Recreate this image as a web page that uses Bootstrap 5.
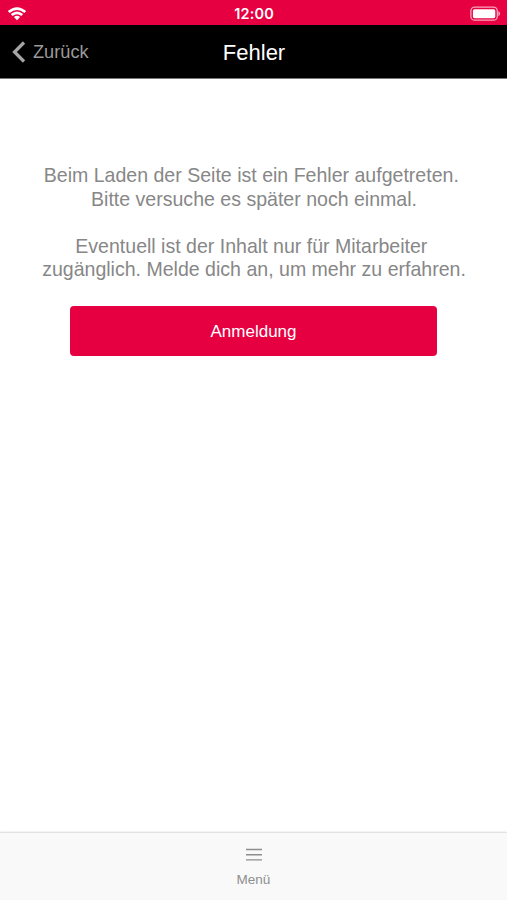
<!DOCTYPE html>
<html lang="de">
<head>
<meta charset="utf-8">
<meta name="viewport" content="width=device-width, initial-scale=1">
<title>Fehler</title>
<link href="https://cdn.jsdelivr.net/npm/bootstrap@5.3.0/dist/css/bootstrap.min.css" rel="stylesheet">
<style>
body { font-family: "Liberation Sans", Arial, sans-serif; }
.status-bar { height: 25px; background: #e60041; font: 600 14.5px/25px Inter, sans-serif; padding: 1px 6px 0 7px; letter-spacing: .15px; }
.title-bar { height: 54px; background: #000; border-bottom: 1px solid #777; padding: 1px 12px 0; }
.back-link { color: #9a9a9a; font-size: 18.2px; line-height: 26px; gap: 7px; }
.back-link:hover { color: #bbb; }
.page-title { font-size: 22px; line-height: 26px; padding: 1px 0 0 1px; }
.error-text { color: #878787; font-size: 19.56px; line-height: 23.5px; margin: 85px 0 24.5px; padding-left: 1px; }
.login-btn { width: 367px; height: 50px; background: #e60041; color: #fff; font-size: 17px; border-radius: 4px; border: 0; padding-top: 8px; }
.login-btn:hover { background: #c90039; color: #fff; }
.tab-bar { height: 68px; background: #f9f9f9; border-top: 1px solid #e2e2e2; box-shadow: 0 0 2px #ddd; }
.tab-link { color: #8e8e8e; font-size: 13.5px; line-height: 16px; padding-top: 15px; gap: 10px; }
</style>
</head>
<body class="d-flex flex-column vh-100 bg-white overflow-hidden">
<header class="flex-shrink-0">
  <div class="status-bar row g-0 text-white">
    <div class="col d-flex align-items-center">
      <svg width="20" height="16" viewBox="0 0 20 16" fill="#fff"><path d="M.8 5.1Q10-2.5 19.2 5.1L17.4 6.9Q10 .9 2.6 6.9zM3.8 8.1Q10 3.1 16.2 8.1L14.4 9.9Q10 6.5 5.6 9.9zM6.9 11.1Q10 8.5 13.1 11.1L10 14.2z"/></svg>
    </div>
    <div class="col-auto">12:00</div>
    <div class="col d-flex align-items-center justify-content-end">
      <svg width="31" height="16" viewBox="0 0 31 16"><rect x=".9" y="1.2" width="26.4" height="13" rx="3.8" fill="none" stroke="#fff" stroke-opacity=".65" stroke-width="1.3"/><rect x="2.9" y="3.2" width="22.4" height="9" rx="1.6" fill="#fff"/><path d="M28.4 5.1q3.4 2.6 0 5.2z" fill="#fff" fill-opacity=".7"/></svg>
    </div>
  </div>
  <nav class="title-bar row g-0 align-items-center">
    <div class="col d-flex align-items-center">
      <a class="back-link d-inline-flex align-items-center text-decoration-none" href="#">
        <svg width="14" height="22" viewBox="0 0 14 22" fill="none" stroke="#a5a5a5" stroke-width="3.2"><path d="M12 1.5 2.5 11 12 20.5"/></svg>
        <span>Zurück</span>
      </a>
    </div>
    <h1 class="page-title col-auto m-0 fw-normal text-white">Fehler</h1>
    <div class="col"></div>
  </nav>
</header>
<main class="flex-grow-1 d-flex flex-column align-items-center text-center">
  <p class="error-text text-nowrap">Beim Laden der Seite ist ein Fehler aufgetreten.&nbsp;<br>Bitte versuche es später noch einmal.<br><br>Eventuell ist der Inhalt nur für Mitarbeiter&nbsp;<br>zugänglich. Melde dich an, um mehr zu erfahren.</p>
  <a class="login-btn btn d-flex align-items-center justify-content-center" href="#">Anmeldung</a>
</main>
<footer class="tab-bar flex-shrink-0 d-flex justify-content-center">
  <a class="tab-link d-flex flex-column align-items-center text-decoration-none" href="#">
    <svg width="16" height="14" viewBox="0 0 16 14" stroke="#8e8e8e" stroke-width="1.4"><path d="M0 1.5h16M0 6.7h16M0 11.9h16"/></svg>
    <span>Menü</span>
  </a>
</footer>
<script src="https://cdn.jsdelivr.net/npm/bootstrap@5.3.0/dist/js/bootstrap.bundle.min.js"></script>
</body>
</html>
